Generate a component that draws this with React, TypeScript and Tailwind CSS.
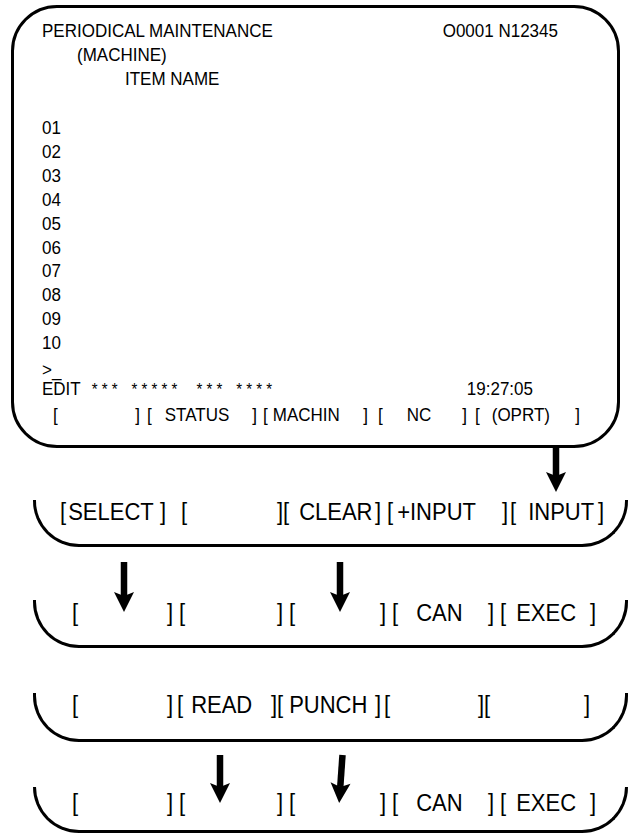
import React from "react";

function Key({ box, pad, label }: { box: string; pad?: string; label?: string }) {
  return (
    <span className={`flex scale-y-110 ${box}`}>
      <span>[</span>
      {label && <span className={pad}>{label}</span>}
      <span className="ml-auto">]</span>
    </span>
  );
}

function Arrow({ x, y0, y1, tilt = 0 }: { x: number; y0: number; y1: number; tilt?: number }) {
  const hT = y1 - 19;
  return (
    <g transform={`rotate(${tilt} ${x} ${y0})`}>
      <rect x={x - 3.25} y={y0} width={6.5} height={hT - y0 + 3} />
      <polygon points={`${x - 10},${hT - 1} ${x},${hT + 3} ${x + 10},${hT - 1} ${x},${y1}`} />
    </g>
  );
}

const lines = ["01", "02", "03", "04", "05", "06", "07", "08", "09", "10"];

export default function App() {
  return (
    <div className="relative h-[836px] w-[629px] overflow-hidden bg-white font-['Liberation_Sans',Arial,sans-serif] text-black">
      {/* screen */}
      <div className="ml-[11px] mt-[5px] h-[443px] w-[609px] rounded-[46px] border-[3px] border-black pl-[28px] pt-[11px] text-[17px] leading-[24px]">
        <div className="flex scale-y-110">
          <span>PERIODICAL MAINTENANCE</span>
          <span className="ml-auto mr-[59px]">O0001 N12345</span>
        </div>
        <div className="scale-y-110 pl-[35px]">(MACHINE)</div>
        <div className="scale-y-110 pl-[83px]">ITEM NAME</div>
        <div className="h-[25px]" />
        {lines.map((n) => (
          <div key={n} className="scale-y-110">
            {n}
          </div>
        ))}
        <div className="mt-[2px] h-[20px] scale-y-110">&gt;_</div>
        <div className="flex h-[26px] scale-y-110 items-baseline">
          <span>EDIT</span>
          <span className="ml-[11px] whitespace-pre text-[15px]">* * *</span>
          <span className="ml-[14px] whitespace-pre text-[15px]">* * * * *</span>
          <span className="ml-[19px] whitespace-pre text-[15px]">* * *</span>
          <span className="ml-[14px] whitespace-pre text-[15px]">* * * *</span>
          <span className="ml-auto mr-[84px]">19:27:05</span>
        </div>
        <div className="flex">
          <Key box="ml-[11px] w-[87px]" />
          <Key box="ml-[7px] w-[110px]" pad="ml-[13px]" label="STATUS" />
          <Key box="ml-[6px] w-[105px]" pad="ml-[5px]" label="MACHIN" />
          <Key box="ml-[10px] w-[89px]" pad="ml-[24px]" label="NC" />
          <Key box="ml-[8px] w-[105px]" pad="ml-[12px]" label="(OPRT)" />
        </div>
      </div>

      {/* soft key rows */}
      <div className="ml-[33px] mt-[52px] flex h-[47px] w-[595px] rounded-b-[46px] border-x-[3px] border-b-[3px] border-black text-[22px] leading-[24px]">
        <Key box="ml-[24px] w-[106px] h-[24px]" pad="ml-[2px]" label="SELECT" />
        <Key box="ml-[15px] w-[102px] h-[24px]" />
        <Key box="w-[98px] h-[24px]" pad="ml-[10px]" label="CLEAR" />
        <Key box="ml-[6px] w-[121px] h-[24px]" pad="ml-[4px]" label="+INPUT" />
        <Key box="ml-[2px] w-[94px] h-[24px]" pad="ml-[12px]" label="INPUT" />
      </div>

      <div className="ml-[33px] mt-[53px] flex h-[48px] w-[595px] rounded-b-[46px] border-x-[3px] border-b-[3px] border-black pt-[1px] text-[22px] leading-[24px]">
        <Key box="ml-[36px] w-[101px] h-[24px]" />
        <Key box="ml-[6px] w-[104px] h-[24px]" />
        <Key box="ml-[6px] w-[97px] h-[24px]" />
        <Key box="ml-[6px] w-[102px] h-[24px]" pad="ml-[18px]" label="CAN" />
        <Key box="ml-[6px] w-[96px] h-[24px]" pad="ml-[10px]" label="EXEC" />
      </div>

      <div className="ml-[33px] mt-[45px] flex h-[49px] w-[595px] rounded-b-[46px] border-x-[3px] border-b-[3px] border-black text-[22px] leading-[24px]">
        <Key box="ml-[36px] w-[101px] h-[24px]" />
        <Key box="ml-[4px] w-[100px] h-[24px]" pad="ml-[8px]" label="READ" />
        <Key box="w-[104px] h-[24px]" pad="ml-[6px]" label="PUNCH" />
        <Key box="ml-[3px] w-[100px] h-[24px]" />
        <Key box="w-[106px] h-[24px]" />
      </div>

      <div className="ml-[33px] mt-[45px] flex h-[46px] w-[595px] rounded-b-[46px] border-x-[3px] border-b-[3px] border-black pt-[4px] text-[22px] leading-[24px]">
        <Key box="ml-[36px] w-[101px] h-[24px]" />
        <Key box="ml-[6px] w-[104px] h-[24px]" />
        <Key box="ml-[6px] w-[97px] h-[24px]" />
        <Key box="ml-[6px] w-[102px] h-[24px]" pad="ml-[18px]" label="CAN" />
        <Key box="ml-[6px] w-[96px] h-[24px]" pad="ml-[10px]" label="EXEC" />
      </div>

      {/* flow arrows */}
      <svg className="pointer-events-none absolute left-0 top-0" width="629" height="836" viewBox="0 0 629 836">
        <Arrow x={556} y0={446} y1={492} />
        <Arrow x={124} y0={562} y1={612} />
        <Arrow x={340} y0={562} y1={612} />
        <Arrow x={220} y0={755} y1={803} />
        <Arrow x={342.5} y0={755} y1={803} tilt={4} />
      </svg>
    </div>
  );
}
